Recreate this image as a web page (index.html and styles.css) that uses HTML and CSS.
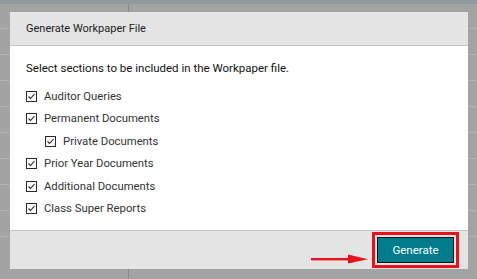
FILE: index.html
```html
<!DOCTYPE html>
<html>
<head>
<meta charset="utf-8">
<link rel="stylesheet" href="styles.css">
</head>
<body>
<div class="page">
  <div class="topbar"></div>
  <div class="table">
    <div class="row"></div><div class="row"></div><div class="row"></div><div class="row"></div><div class="row"></div>
    <div class="row"></div><div class="row"></div><div class="row"></div><div class="row"></div>
    <div class="row last">
      <span class="cell c1">Generate <span class="chev">›</span></span>
      <span class="cell c2">NO <span class="chev">›</span></span>
      <span class="cell c3">"</span>
      <span class="cell c4">"</span>
    </div>
  </div>
</div>

<div class="modal">
  <div class="modal-header">Generate Workpaper File</div>
  <div class="modal-body">
    <p class="intro">Select sections to be included in the Workpaper file.</p>
    <ul class="options">
      <li class="opt"><svg class="cb" viewBox="0 0 11 11"><rect x="0.5" y="0.5" width="10" height="10" fill="#fff" stroke="#2a2a2a"/><path d="M2.5 5.5 L4.5 7.5 L8.5 3.2" fill="none" stroke="#2a2a2a" stroke-width="1.1"/></svg>Auditor Queries</li>
      <li class="opt"><svg class="cb" viewBox="0 0 11 11"><rect x="0.5" y="0.5" width="10" height="10" fill="#fff" stroke="#2a2a2a"/><path d="M2.5 5.5 L4.5 7.5 L8.5 3.2" fill="none" stroke="#2a2a2a" stroke-width="1.1"/></svg>Permanent Documents</li>
      <li class="opt sub"><svg class="cb" viewBox="0 0 11 11"><rect x="0.5" y="0.5" width="10" height="10" fill="#fff" stroke="#2a2a2a"/><path d="M2.5 5.5 L4.5 7.5 L8.5 3.2" fill="none" stroke="#2a2a2a" stroke-width="1.1"/></svg>Private Documents</li>
      <li class="opt"><svg class="cb" viewBox="0 0 11 11"><rect x="0.5" y="0.5" width="10" height="10" fill="#fff" stroke="#2a2a2a"/><path d="M2.5 5.5 L4.5 7.5 L8.5 3.2" fill="none" stroke="#2a2a2a" stroke-width="1.1"/></svg>Prior Year Documents</li>
      <li class="opt"><svg class="cb" viewBox="0 0 11 11"><rect x="0.5" y="0.5" width="10" height="10" fill="#fff" stroke="#2a2a2a"/><path d="M2.5 5.5 L4.5 7.5 L8.5 3.2" fill="none" stroke="#2a2a2a" stroke-width="1.1"/></svg>Additional Documents</li>
      <li class="opt"><svg class="cb" viewBox="0 0 11 11"><rect x="0.5" y="0.5" width="10" height="10" fill="#fff" stroke="#2a2a2a"/><path d="M2.5 5.5 L4.5 7.5 L8.5 3.2" fill="none" stroke="#2a2a2a" stroke-width="1.1"/></svg>Class Super Reports</li>
    </ul>
  </div>
  <div class="modal-footer">
    <div class="highlight"><button class="btn">Generate</button></div>
  </div>
</div>

<svg class="arrow" width="60" height="12" viewBox="0 0 60 12">
  <rect x="0" y="5" width="42" height="2.4" fill="#e8121c"/>
  <polygon points="37,1.5 57,6.2 37,10.5" fill="#e8121c"/>
</svg>
</body>
</html>
```

FILE: styles.css
```css
* { box-sizing: border-box; }
html, body { margin: 0; padding: 0; }
body {
  width: 477px;
  height: 279px;
  overflow: hidden;
  background: #a3a3a3;
  font-family: Roboto, "Liberation Sans", Arial, sans-serif;
  position: relative;
}
.page { width: 477px; height: 279px; display: flex; flex-direction: column; }
.topbar { height: 4px; background: #8f9a9b; flex: none; }
.table {
  flex: 1;
  display: flex;
  flex-direction: column;
  background: linear-gradient(#8a8a8a, #8a8a8a) no-repeat 128px 0 / 1px 100%;
}
.row {
  height: 26px;
  flex: none;
  border-bottom: 1px solid #b2b2b2;
}
.row:first-child { height: 25px; }
.row.last { border-bottom: none; position: relative; font-size: 11.5px; color: #1f1f1f; }
.cell { position: absolute; top: 9px; }
.c1 { left: 27px; }
.c2 { left: 153px; color: #b83a3a; }
.c3 { left: 253px; font-weight: 700; }
.c4 { left: 366px; font-weight: 700; }
.chev { color: #555; }

.modal {
  position: absolute;
  left: 10px;
  top: 12px;
  width: 458px;
  height: 257px;
  background: #fff;
  display: flex;
  flex-direction: column;
}
.modal-header {
  height: 34px;
  flex: none;
  background: #e4e4e4;
  border-bottom: 1px solid #c6c6c6;
  padding-left: 16px;
  font-size: 11px;
  line-height: 33px;
  color: #222;
}
.modal-body {
  flex: 1;
  padding: 14px 16px 0 16px;
}
.intro {
  margin: 0 0 9px 0;
  font-size: 11.5px;
  line-height: 16px;
  color: #111;
  font-weight: 400;
}
.options { list-style: none; margin: 0; padding: 0; }
.opt {
  height: 22.5px;
  display: flex;
  align-items: center;
  font-size: 11.3px;
  color: #333;
}
.opt.sub { padding-left: 19px; }
.cb { width: 11px; height: 11px; margin-right: 7px; flex: none; }

.modal-footer {
  height: 39px;
  flex: none;
  background: #e4e4e4;
  border-top: 1px solid #c6c6c6;
  display: flex;
  justify-content: flex-end;
  align-items: center;
  padding-right: 9px;
}
.highlight {
  border: 3px solid #e8121c;
  padding: 2px;
}
.btn {
  display: block;
  width: 77px;
  height: 26px;
  background: #007c8c;
  border: 1px solid #111;
  color: #fff;
  font-family: Roboto, "Liberation Sans", Arial, sans-serif;
  font-size: 11.5px;
  padding: 0;
}
.arrow {
  position: absolute;
  left: 311px;
  top: 253px;
}
```
